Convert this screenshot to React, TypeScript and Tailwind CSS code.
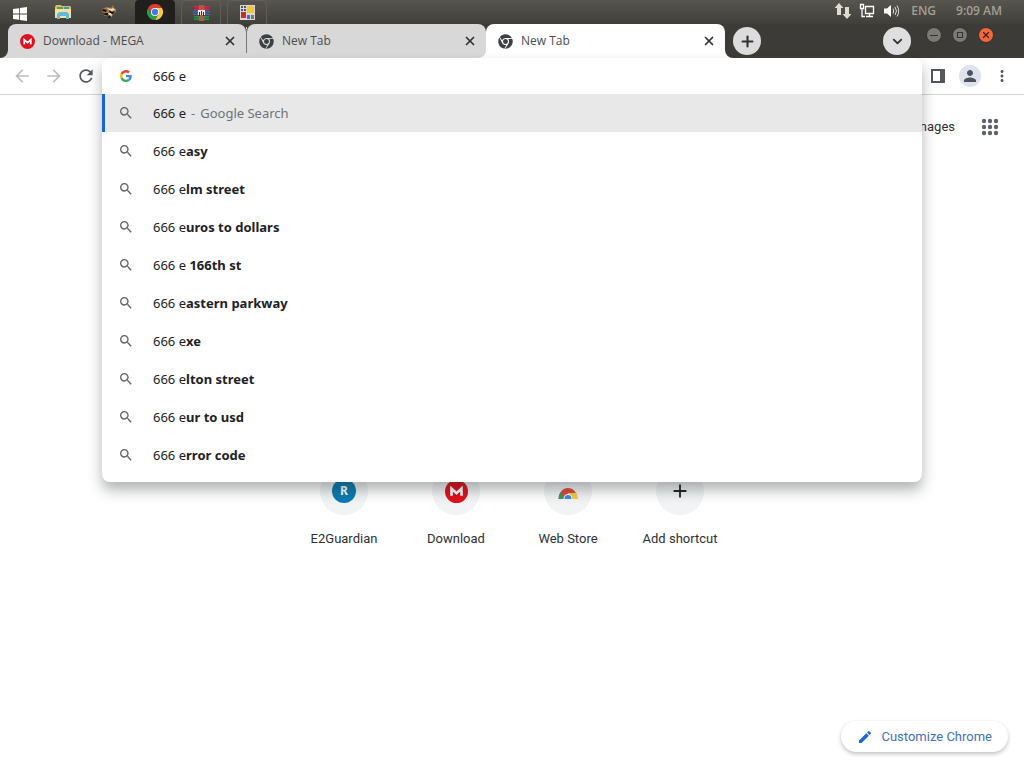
import React, { useState } from 'react';
import { ChevronDown, Plus, X } from 'lucide-react';
import { FaChrome } from 'react-icons/fa';
import {
  MdAdd,
  MdArrowBack,
  MdArrowForward,
  MdEdit,
  MdMoreVert,
  MdPerson,
  MdRefresh,
  MdSearch,
} from 'react-icons/md';

const QUERY = '666 e';

const suggestions = [
  { id: 1, rest: 'asy' },
  { id: 2, rest: 'lm street' },
  { id: 3, rest: 'uros to dollars' },
  { id: 4, rest: ' 166th st' },
  { id: 5, rest: 'astern parkway' },
  { id: 6, rest: 'xe' },
  { id: 7, rest: 'lton street' },
  { id: 8, rest: 'ur to usd' },
  { id: 9, rest: 'rror code' },
];

const MegaIcon: React.FC<{ size: number }> = ({ size }) => (
  <svg width={size} height={size} viewBox="0 0 24 24" aria-hidden="true">
    <circle cx="12" cy="12" r="12" fill="#e0101c" />
    <path d="M6.800 16.500V9l5.200 4.800L17.200 9v7.500" fill="none" stroke="#fff" strokeWidth="2.8" />
  </svg>
);

const ChromeIcon: React.FC<{ size: number }> = ({ size }) => (
  <svg width={size} height={size} viewBox="0 0 24 24" aria-hidden="true">
    <path d="M12 6h10.4A12 12 0 0 1 12 24l5.2-9z" fill="#fcc934" />
    <path d="M1.6 6A12 12 0 0 1 22.4 6H12l-5.2 9z" fill="#e33b2e" />
    <path d="M1.6 6 6.8 15 12 18l5.2-3L12 24A12 12 0 0 1 1.6 6z" fill="#2a9c4a" />
    <circle cx="12" cy="12" r="6" fill="#fff" />
    <circle cx="12" cy="12" r="4.7" fill="#3b7de8" />
  </svg>
);

const GoogleIcon = () => (
  <svg width="12" height="12" viewBox="0 0 48 48" aria-hidden="true">
    <path d="M24 9.500c3.500 0 6.700 1.200 9.200 3.600l6.900-6.900C35.900 2.400 30.500 0 24 0 14.600 0 6.500 5.400 2.600 13.200l8 6.200C12.400 13.700 17.700 9.500 24 9.500z" fill="#ea4335" />
    <path d="M47 24.600c0-1.600-.2-3.100-.4-4.600H24v9h12.900c-.6 3-2.200 5.500-4.700 7.200l7.700 6C44.400 38 47 31.800 47 24.600z" fill="#4285f4" />
    <path d="M10.500 28.600a14.500 14.500 0 0 1 0-9.200l-8-6.200a24 24 0 0 0 0 21.600z" fill="#fbbc05" />
    <path d="M24 48c6.500 0 11.900-2.100 15.900-5.800l-7.700-6C30 37.700 27.200 38.500 24 38.500c-6.300 0-11.600-4.200-13.500-9.900l-8 6.200C6.500 42.600 14.600 48 24 48z" fill="#34a853" />
  </svg>
);

const WindowsIcon = () => (
  <svg width="14" height="14" viewBox="0 0 14 14" fill="#fff" aria-hidden="true">
    <path d="M0 2 6 1.2v5.4H0zM6.8 1.1 14 0v6.6H6.8zM0 7.4h6v5.4L0 12zM6.8 7.4H14V14l-7.2-1.1z" />
  </svg>
);

const FolderIcon = () => (
  <svg width="18" height="16" viewBox="0 0 18 16" aria-hidden="true">
    <path d="M1 3 2 1h5l1 1h8l1 1v11H1z" fill="#d9bd62" />
    <path d="M3 3h6v2H3z" fill="#5c9c50" />
    <path d="M10 3h5v2h-5z" fill="#4d8fc4" />
    <path d="M1 5h16v9H1z" fill="#f2e3a0" />
    <path d="M3 10l2-2h8l2 2v5h-3v-3H6v3H3z" fill="#62b8dc" />
  </svg>
);

const RaccoonIcon = () => (
  <svg width="16" height="14" viewBox="0 0 16 14" aria-hidden="true">
    <path d="M1 4 6 2l4 1 2-3 1 3 2 1v3l-3 2-1 3H8l-1-2-4 1 1-3-3-1z" fill="#a57c4c" />
    <path d="m2 4 4 1-1 2-4-1zM8 5l3 2 3-1-2 3H9zM4 8h4l-1 2H3z" fill="#171310" />
    <path d="m6 3 4 1 2-1 2 2-3 1-3-1zM7 8h3l1 2-2 2z" fill="#eee0c5" />
    <path d="m8 10 2 1-1 2H7z" fill="#171310" />
  </svg>
);

const ArchiveIcon = () => (
  <svg width="17" height="16" viewBox="0 0 17 16" aria-hidden="true">
    <path d="M1 1h15v4H1z" fill="#c33459" />
    <path d="M0 6h17v4H0z" fill="#4a63b0" />
    <path d="M1 11h15v4H1z" fill="#348a4c" />
    <path d="M1 3h4M12 3h4" stroke="#8f1d3d" />
    <path d="M0 8h4M13 8h4" stroke="#27407f" />
    <path d="M1 13h4M12 13h4" stroke="#1d6332" />
    <path d="M6 0h5v16H6z" fill="#b0593c" />
    <path d="M5 5h7v5H5z" fill="#efe9dd" />
    <path d="M6 7h1v4H6zM8 6h1v4H8zM10 7h1v4h-1z" fill="#4a2024" />
  </svg>
);

const BlocksIcon = () => (
  <svg width="15" height="15" viewBox="0 0 15 15" aria-hidden="true">
    <path d="M0 0h15v15H0z" fill="#d8d8d8" />
    <path d="M1 1h2v2H1zM4 1h2v2H4zM1 4h2v2H1zM4 4h2v2H4z" fill="#565656" />
    <path d="M7 1h7v7H7z" fill="#f3c831" />
    <path d="M1 7h5v6H1z" fill="#c92c2c" />
    <path d="M7 10h3v4H7z" fill="#3a6fce" />
    <path d="M11 10h3v4h-3z" fill="#777" />
  </svg>
);

const NetworkArrowsIcon = () => (
  <svg width="16" height="16" viewBox="0 0 16 16" fill="#dfdbd2" aria-hidden="true">
    <path d="M4 0 8.500 5H6v7H2V5H-.5zM12 16 7.500 11H10V4h4v7h2.500z" />
  </svg>
);

const MonitorIcon = () => (
  <svg width="16" height="16" viewBox="0 0 16 16" fill="none" stroke="#fff" aria-hidden="true">
    <path d="M1.500 1.500h3v4h-3zM3 5.500v8h3M6.500 3.500h8v7h-8zM10.500 10.500v3M7 13.500h7" strokeWidth="1.300" />
  </svg>
);

const SpeakerIcon = () => (
  <svg width="16" height="16" viewBox="0 0 16 16" aria-hidden="true">
    <path d="M1 5.500h3L8 2v12l-4-3.500H1z" fill="#fff" />
    <path d="M10 5.500q1.500 2.500 0 5M12 4q3 4 0 8M14 2.500q3.500 5.500 0 11" fill="none" stroke="#dedede" />
  </svg>
);

const WebStoreIcon = () => (
  <svg width="20" height="20" viewBox="0 0 20 20" aria-hidden="true">
    <path d="M0.500 18a9.500 11 0 0 1 19 0z" fill="#dd4b3e" />
    <path d="M0.500 18q0-4 2-7l4 7z" fill="#2f9e57" />
    <path d="M10 12h8.200q1.300 3 1.300 6H10z" fill="#f7cb3f" />
    <path d="M5.500 18a4.500 5 0 0 1 9 0z" fill="#fff" />
    <path d="M6.500 18a3.500 4 0 0 1 7 0z" fill="#4285e8" />
  </svg>
);

const AppsIcon = () => (
  <svg width="24" height="24" viewBox="0 0 24 24" fill="currentColor" aria-hidden="true">
    {[6, 12, 18].map((y) => [6, 12, 18].map((x) => <circle key={`${x}-${y}`} cx={x} cy={y} r="2.2" />))}
  </svg>
);

const Taskbar = () => (
  <div className="flex h-6 items-center justify-between bg-linear-to-b from-[#57554e] to-[#403f3a] pr-[22px]">
    <div className="flex h-full items-end">
      <button aria-label="Start" className="flex h-6 w-[39px] items-center justify-center pt-1">
        <WindowsIcon />
      </button>
      <button aria-label="Files" className="flex h-6 w-12 items-center justify-center">
        <FolderIcon />
      </button>
      <button aria-label="GIMP" className="flex h-6 w-12 items-center justify-center pr-1">
        <RaccoonIcon />
      </button>
      <div className="flex gap-[6px]">
        <button aria-label="Chrome" className="flex h-6 w-10 items-center justify-center rounded-t-sm bg-[#201f1c]">
          <ChromeIcon size={16} />
        </button>
        <button aria-label="Archiver" className="flex h-6 w-10 items-center justify-center rounded-t-sm border border-b-0 border-[#5f5d56]">
          <ArchiveIcon />
        </button>
        <button aria-label="Blocks" className="flex h-6 w-10 items-center justify-center rounded-t-sm border border-b-0 border-[#5f5d56]">
          <BlocksIcon />
        </button>
      </div>
    </div>
    <div className="flex items-center gap-2 pb-0.5 text-xs leading-4 font-bold text-[#a39f96]">
      <NetworkArrowsIcon />
      <MonitorIcon />
      <SpeakerIcon />
      <span className="ml-1 font-['Open_Sans',sans-serif] font-semibold">ENG</span>
      <time className="ml-3 font-['Open_Sans',sans-serif] font-semibold">9:09 AM</time>
    </div>
  </div>
);

interface TabProps {
  title: string;
  icon: React.ReactNode;
  active?: boolean;
  divided?: boolean;
}

const Tab: React.FC<TabProps> = ({ title, icon, active, divided }) => (
  <div className="flex h-full w-[239px] min-w-0 items-stretch">
    <div
      className={
        active
          ? 'flex min-w-0 flex-1 items-center rounded-t-lg bg-white pr-2 pl-3'
          : 'flex min-w-0 flex-1 items-center rounded-t-lg bg-[#d8d8d8] pr-2 pl-3'
      }
    >
      {icon}
      <span className="ml-2 flex-1 truncate">{title}</span>
      <button aria-label={`Close ${title}`} className="flex size-4 items-center justify-center text-[#333]">
        <X size={14} strokeWidth={3} />
      </button>
    </div>
    {divided && (
      <div className="flex items-center bg-linear-to-b from-[#3c3b37] from-10% to-[#d8d8d8] to-10%">
        <div className="h-6 w-px bg-[#777]" />
      </div>
    )}
  </div>
);

const TabStrip = () => (
  <div className="flex h-[34px] justify-between bg-[#3c3b37] pr-[30px]">
    <div className="flex min-w-0 flex-1 text-xs text-[#4a4d51]">
      {/* outward curve at the foot of the first tab */}
      <div className="w-2 bg-[#d8d8d8]">
        <div className="h-full rounded-br-lg bg-[#3c3b37]" />
      </div>
      <Tab title="Download - MEGA" icon={<MegaIcon size={15} />} divided />
      <div className="flex bg-linear-to-b from-[#3c3b37] from-50% to-white to-50%">
        <div className="flex overflow-hidden rounded-br-lg">
          <Tab title="New Tab" icon={<FaChrome size={15} className="text-[#3c4043]" />} />
        </div>
      </div>
      <Tab title="New Tab" icon={<FaChrome size={15} className="text-[#3c4043]" />} active />
      <div className="bg-white">
        <div className="flex h-full items-center rounded-bl-lg bg-[#3c3b37] pl-2">
          <button aria-label="New tab" className="flex size-7 items-center justify-center rounded-full bg-[#dcdcdc] text-[#333]">
            <Plus size={17} strokeWidth={3} />
          </button>
        </div>
      </div>
    </div>
    <div className="flex items-center">
      <button aria-label="Search tabs" className="mr-[15px] flex size-7 items-center justify-center rounded-full bg-[#dfdfdf] text-[#333]">
        <ChevronDown size={15} strokeWidth={3} />
      </button>
      <div className="flex items-center gap-[10px] pb-3">
        <button aria-label="Minimize" className="flex size-4 items-center justify-center rounded-full border border-[#33322f] bg-[#7b7a75]">
          <span className="h-px w-2 bg-[#33322f]" />
        </button>
        <button aria-label="Maximize" className="flex size-4 items-center justify-center rounded-full border border-[#33322f] bg-[#7b7a75]">
          <span className="size-[6px] border border-[#33322f]" />
        </button>
        <button aria-label="Close" className="flex size-4 items-center justify-center rounded-full border border-[#33322f] bg-[#f0693a] text-[#49200f]">
          <X size={10} strokeWidth={3} />
        </button>
      </div>
    </div>
  </div>
);

const Omnibox = () => {
  const [value, setValue] = useState(QUERY);

  return (
    <div className="relative h-9 min-w-0 flex-1">
      <div className="absolute inset-x-0 top-0 z-10 overflow-hidden rounded-lg bg-white font-['Noto_Sans',sans-serif] text-[13px] leading-5 text-[#202124] shadow-[0_8px_14px_0_rgba(32,40,40,0.35)]">
        <div className="flex h-9 items-center pl-[18px]">
          <GoogleIcon />
          <input
            aria-label="Search Google or type a URL"
            value={value}
            onChange={(e) => setValue(e.target.value)}
            className="ml-[21px] min-w-0 flex-1 bg-transparent outline-none"
          />
        </div>
        <ul className="pb-2">
          <li className="flex h-[38px] items-center border-l-3 border-[#1a66d8] bg-[#e8e8e8] pl-[13px]">
            <MdSearch size={16} className="text-[#5f6368]" />
            <span className="ml-[19px]">{QUERY}</span>
            <span className="ml-[5px] flex gap-[5px] text-[#6f7377]">
              <span>-</span>
              <span>Google Search</span>
            </span>
          </li>
          {suggestions.map((s) => (
            <li key={s.id} className="flex h-[38px] items-center border-l-3 border-transparent pl-[13px]">
              <MdSearch size={16} className="text-[#5f6368]" />
              <span className="ml-[19px] whitespace-pre">
                {QUERY}
                <b className="font-bold">{s.rest}</b>
              </span>
            </li>
          ))}
        </ul>
      </div>
    </div>
  );
};

const Toolbar = () => (
  <div className="flex h-[37px] border-b border-[#d5d5d5] bg-white px-[6px] text-[#54575b]">
    <div className="flex items-center">
      <button aria-label="Back" className="flex w-8 justify-center text-[#bcbec1]">
        <MdArrowBack size={20} />
      </button>
      <button aria-label="Forward" className="flex w-8 justify-center text-[#bcbec1]">
        <MdArrowForward size={20} />
      </button>
      <button aria-label="Reload" className="flex w-8 justify-center">
        <MdRefresh size={20} />
      </button>
    </div>
    <Omnibox />
    <div className="flex items-center">
      <button aria-label="Side panel" className="flex w-8 justify-center">
        <svg width="14" height="14" viewBox="0 0 14 14" aria-hidden="true">
          <path d="M0 0h14v14H0zM2 2v10h7V2z" fill="currentColor" fillRule="evenodd" />
        </svg>
      </button>
      <button aria-label="Profile" className="flex w-8 justify-center">
        <span className="flex size-[22px] items-center justify-center rounded-full bg-[#dfe2ea] text-[#4b5260]">
          <MdPerson size={18} />
        </span>
      </button>
      <button aria-label="Menu" className="flex w-8 justify-center">
        <MdMoreVert size={18} />
      </button>
    </div>
  </div>
);

const shortcuts = [
  {
    name: 'E2Guardian',
    icon: (
      <span className="flex size-6 items-center justify-center rounded-full bg-[#0b7bb0] font-['Noto_Sans',sans-serif] text-xs font-bold text-white">
        R
      </span>
    ),
  },
  { name: 'Download', icon: <MegaIcon size={23} /> },
  { name: 'Web Store', icon: <WebStoreIcon /> },
  { name: 'Add shortcut', icon: <MdAdd size={22} className="text-[#202124]" /> },
];

const NewTabPage = () => (
  <main className="flex flex-1 flex-col font-[Roboto,sans-serif] text-[13px] leading-4 text-[#2f3033]">
    <div className="flex h-16 items-center justify-end gap-[23px] pr-[22px]">
      <a href="#images">Images</a>
      <button aria-label="Google apps" className="text-[#5f6368]">
        <AppsIcon />
      </button>
    </div>
    <nav className="mt-[308px] flex justify-center">
      {shortcuts.map((s) => (
        <a key={s.name} href="#shortcut" className="flex w-28 flex-col items-center gap-4">
          <span className="flex size-12 items-center justify-center rounded-full bg-[#f1f3f4]">{s.icon}</span>
          <span>{s.name}</span>
        </a>
      ))}
    </nav>
    <div className="mt-auto flex justify-end pr-4 pb-4">
      <button className="flex h-[31px] items-center gap-2 rounded-full bg-white px-4 text-[#4470bd] shadow-[0_2px_4px_rgba(0,0,0,0.25)]">
        <MdEdit size={16} className="text-[#1a66d8]" />
        Customize Chrome
      </button>
    </div>
  </main>
);

const App: React.FC = () => (
  <div className="flex min-h-screen flex-col bg-white font-['Open_Sans',sans-serif]">
    <Taskbar />
    <TabStrip />
    <Toolbar />
    <NewTabPage />
  </div>
);

export default App;
